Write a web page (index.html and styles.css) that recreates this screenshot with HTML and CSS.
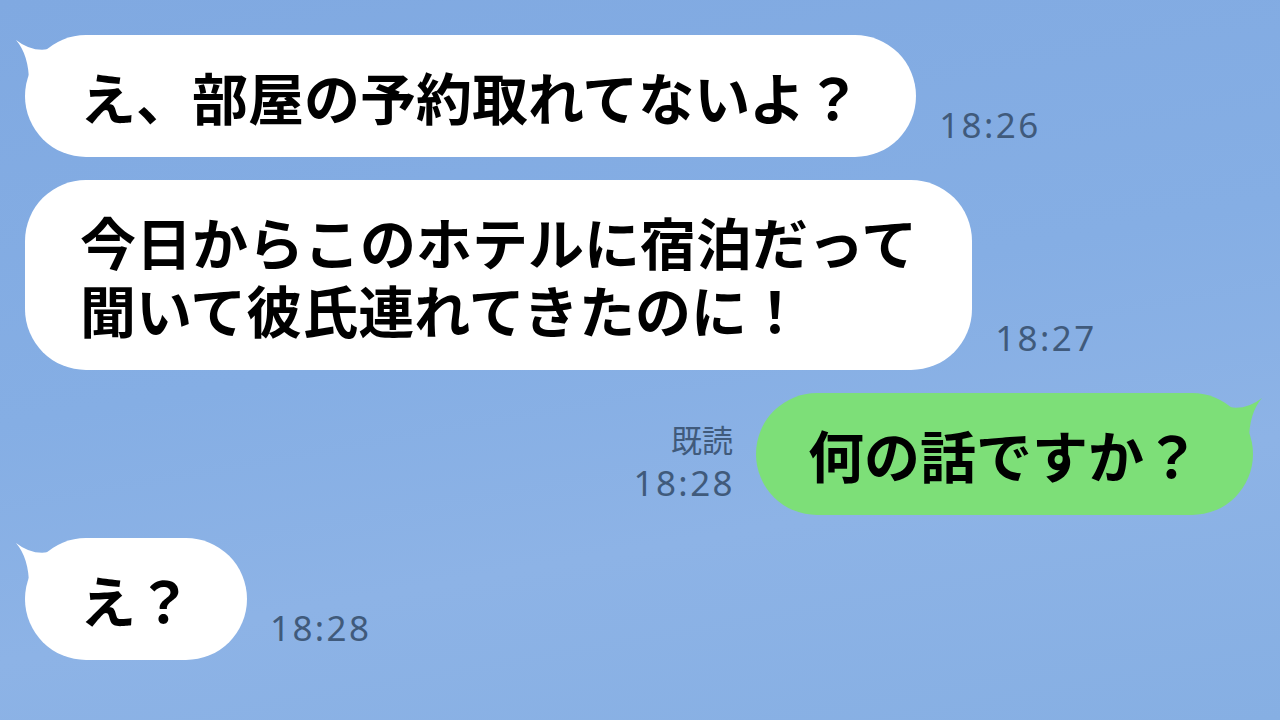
FILE: index.html
```html
<!DOCTYPE html>
<html lang="ja">
<head>
  <meta charset="UTF-8" />
  <meta name="viewport" content="width=device-width, initial-scale=1" />
  <title>トーク</title>
  <link rel="stylesheet" href="styles.css">
</head>
<body>

  <div class="chat">

    <div class="row">
      <div class="bubble left has-tail">
        <svg class="tail" viewBox="0 0 60 50" width="60" height="50"><path d="M3 5 Q22 20 44 12 L44 48 L16 48 Q16 20 3 5 Z" /></svg>
        え、部屋の予約取れてないよ？
      </div>
      <div class="meta"><span class="time">18:26</span></div>
    </div>

    <div class="row">
      <div class="bubble left">今日からこのホテルに宿泊だって<br>聞いて彼氏連れてきたのに！</div>
      <div class="meta"><span class="time">18:27</span></div>
    </div>

    <div class="row mine">
      <div class="meta"><span class="read">既読</span><span class="time">18:28</span></div>
      <div class="bubble right has-tail">
        <svg class="tail" viewBox="0 0 60 50" width="60" height="50"><path d="M57 5 Q38 20 16 12 L16 48 L44 48 Q44 20 57 5 Z" /></svg>
        何の話ですか？
      </div>
    </div>

    <div class="row">
      <div class="bubble left has-tail">
        <svg class="tail" viewBox="0 0 60 50" width="60" height="50"><path d="M3 5 Q22 20 44 12 L44 48 L16 48 Q16 20 3 5 Z" /></svg>
        え？
      </div>
      <div class="meta"><span class="time">18:28</span></div>
    </div>

  </div>

</body>
</html>
```

FILE: styles.css
```css
html, body {
  margin: 0;
  height: 100%;
}
body {
  background: linear-gradient(170deg, #80a9e1 0%, #85aee4 45%, #8db3e6 70%, #86afe3 100%);
  font-family: "Noto Sans CJK JP", "Noto Sans", sans-serif;
  overflow: hidden;
}
.chat {
  display: flex;
  flex-direction: column;
  gap: 23px;
  padding: 35px 27px 0 25px;
}
.row {
  display: flex;
  align-items: flex-end;
  gap: 23px;
}
.row.mine {
  justify-content: flex-end;
}
.bubble {
  position: relative;
  font-size: 56px;
  font-weight: 700;
  line-height: 68px;
  color: #000;
  padding: 27px 55px;
  border-radius: 61px;
  white-space: nowrap;
}
.bubble.left {
  background: #fff;
}
.bubble.right {
  background: #7ddf78;
  padding: 27px 53px 27px 52px;
}
.tail {
  position: absolute;
  top: 0;
}
.bubble.left .tail {
  left: -12px;
  fill: #fff;
}
.bubble.right .tail {
  right: -12px;
  fill: #7ddf78;
}
.meta {
  display: flex;
  flex-direction: column;
  align-items: flex-end;
  color: #405a7b;
  padding-bottom: 12px;
}
.time {
  font-family: "Noto Sans", sans-serif;
  font-size: 35px;
  line-height: 40px;
  letter-spacing: 2.4px;
  margin-right: -2px;
}
.read {
  font-size: 31px;
  line-height: 40px;
  margin-bottom: 4px;
}
```
